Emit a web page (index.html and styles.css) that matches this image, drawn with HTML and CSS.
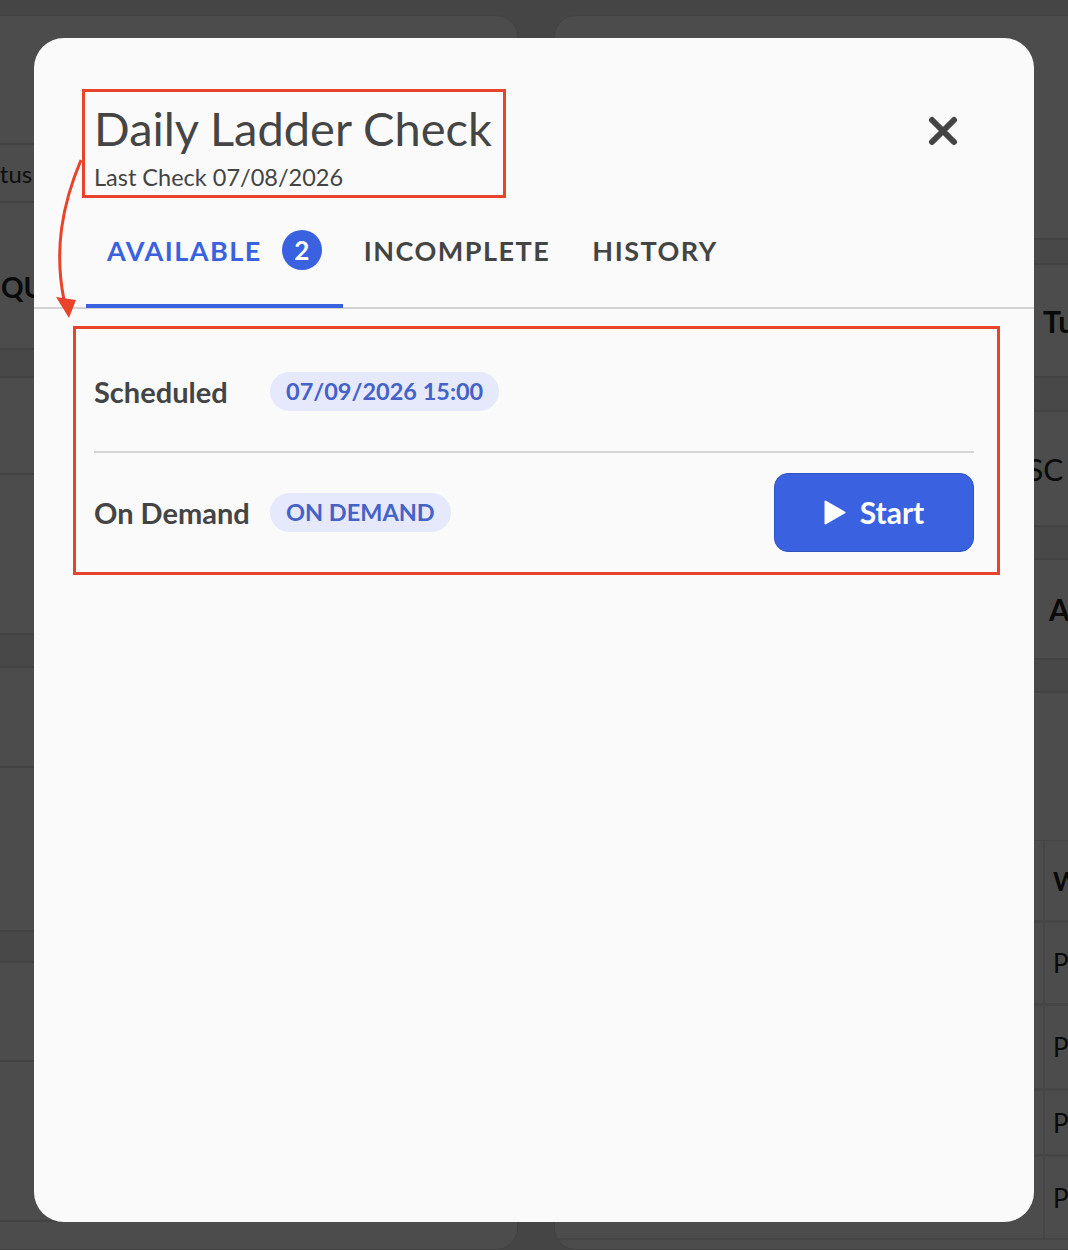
FILE: index.html
```html
<!DOCTYPE html>
<html lang="en">
<head>
    <meta charset="UTF-8">
    <meta name="viewport" content="width=device-width, initial-scale=1.0">
    <title>Daily Ladder Check</title>
    <link rel="stylesheet" href="styles.css">
</head>
<body>
    <!-- page behind the dialog -->
    <div class="page">
        <section class="panel panel-left">
            <div class="prow" style="height: 129px"></div>
            <div class="prow prow-text" style="height: 58px"><span class="status-label">Status</span></div>
            <div class="prow prow-text prow-top" style="height: 147px"><span class="queue-label">QUEUE</span></div>
            <div class="prow prow-band" style="height: 28px"></div>
            <div class="prow" style="height: 97px"></div>
            <div class="prow" style="height: 160px"></div>
            <div class="prow prow-band" style="height: 33px"></div>
            <div class="prow" style="height: 100px"></div>
            <div class="prow" style="height: 164px"></div>
            <div class="prow prow-band" style="height: 31px"></div>
            <div class="prow" style="height: 99px"></div>
            <div class="prow" style="height: 160px"></div>
        </section>
        <section class="panel panel-right">
            <div class="prow" style="height: 224px"></div>
            <div class="prow prow-band" style="height: 25px"></div>
            <div class="prow prow-text" style="height: 113px"><span class="side-label">Tu</span></div>
            <div class="prow prow-band" style="height: 34px"></div>
            <div class="prow prow-text" style="height: 115px"><span class="side-label side-sc">SC</span></div>
            <div class="prow prow-band" style="height: 33px"></div>
            <div class="prow prow-text" style="height: 100px"><span class="side-label side-a">A</span></div>
            <div class="prow prow-band" style="height: 33px"></div>
            <div class="prow prow-plain" style="height: 147px"></div>
            <div class="trow trow-head" style="height: 82px"><span class="tcell"></span><span class="tcell tcell-bold">W</span></div>
            <div class="trow" style="height: 83px"><span class="tcell"></span><span class="tcell">P</span></div>
            <div class="trow" style="height: 85px"><span class="tcell"></span><span class="tcell">P</span></div>
            <div class="trow" style="height: 66px"><span class="tcell"></span><span class="tcell">P</span></div>
            <div class="trow" style="height: 84px"><span class="tcell"></span><span class="tcell">P</span></div>
        </section>
    </div>

    <div class="overlay"></div>

    <div class="modal">
        <div class="modal-header">
            <div class="modal-titles">
                <h1 class="modal-title">Daily Ladder Check</h1>
                <div class="modal-subtitle">Last Check 07/08/2026</div>
            </div>
            <button class="close-btn" aria-label="Close">
                <svg width="30" height="30" viewBox="0 0 30 30">
                    <path d="M4 4 L26 26 M26 4 L4 26" stroke="#444" stroke-width="6" stroke-linecap="round" fill="none"/>
                </svg>
            </button>
        </div>

        <nav class="tabs">
            <div class="tab active">Available <span class="tab-count">2</span></div>
            <div class="tab">Incomplete</div>
            <div class="tab">History</div>
        </nav>

        <div class="check-list">
            <div class="check-row">
                <div class="check-label">Scheduled</div>
                <span class="chip">07/09/2026 15:00</span>
            </div>
            <div class="check-row">
                <div class="check-label">On Demand</div>
                <span class="chip">ON DEMAND</span>
                <button class="start-btn">
                    <svg width="22" height="25" viewBox="0 0 22 25">
                        <path d="M1.5 1.5 L20.5 12.5 L1.5 23.5 Z" fill="#fff" stroke="#fff" stroke-width="2" stroke-linejoin="round"/>
                    </svg>
                    Start
                </button>
            </div>
        </div>
    </div>

    <!-- review markup drawn over the dialog -->
    <svg class="markup" width="1068" height="1250" viewBox="0 0 1068 1250">
        <rect x="83.5" y="90.5" width="421" height="106" fill="none" stroke="#e8432b" stroke-width="3"/>
        <rect x="74.5" y="327.5" width="924" height="246" fill="none" stroke="#e8432b" stroke-width="3"/>
        <path d="M81 160 C 62 205, 54 250, 64 300" fill="none" stroke="#e8432b" stroke-width="3"/>
        <polygon points="56,297 76,300 69,318" fill="#e8432b"/>
    </svg>
</body>
</html>
```

FILE: styles.css
```css
body {
    margin: 0;
    overflow: hidden;
    font-family: 'Lato', 'Open Sans', sans-serif;
    background: #e8e8e8;
}

/* background page */
.page {
    display: flex;
    gap: 36px;
    padding-top: 15px;
    height: 1235px;
    overflow: hidden;
}
.panel {
    background: #fff;
    border: 1px solid #dcdcdc;
    border-radius: 22px;
    overflow: hidden;
}
.panel-left {
    width: 576px;
    margin-left: -60px;
    flex-shrink: 0;
}
.panel-right {
    flex: 1;
    margin-right: -60px;
}
.prow {
    border-bottom: 2px solid #e0e0e0;
    box-sizing: border-box;
    display: flex;
    align-items: center;
}
.prow-band {
    background: #f2f2f2;
}
.prow-plain {
    border-bottom: none;
}
.prow-top {
    align-items: flex-start;
}
.status-label {
    padding-left: 26px;
    font-size: 24px;
    color: #333;
}
.queue-label {
    padding-left: 60px;
    padding-top: 67px;
    font-size: 28px;
    font-weight: 700;
    color: #222;
}
.side-label {
    padding-left: 488px;
    font-size: 30px;
    font-weight: 700;
    color: #222;
}
.side-sc {
    padding-left: 472px;
    font-weight: 400;
}
.side-a {
    padding-left: 494px;
}
.trow {
    display: flex;
    border-bottom: 2px solid #e6e6e6;
    box-sizing: border-box;
    border-top: 1px solid #eaeaea;
}
.tcell {
    display: flex;
    align-items: center;
    padding-left: 8px;
    font-size: 26px;
    color: #222;
}
.tcell:first-child {
    width: 488px;
    flex-shrink: 0;
    padding: 0;
    border-right: 2px solid #e6e6e6;
}
.tcell-bold {
    font-weight: 700;
}

.overlay {
    position: fixed;
    inset: 0;
    background: rgba(0, 0, 0, 0.7);
}

/* dialog */
.modal {
    position: fixed;
    left: 34px;
    top: 38px;
    width: 1000px;
    height: 1184px;
    background: #fafafa;
    border-radius: 30px;
    color: #444;
}
.modal-header {
    display: flex;
    justify-content: space-between;
    align-items: flex-start;
    padding: 61px 76px 0 60px;
}
.modal-title {
    margin: 0;
    font-size: 47px;
    line-height: 58px;
    font-weight: 400;
    color: #454545;
}
.modal-subtitle {
    margin-top: 6px;
    font-size: 23.5px;
    line-height: 29px;
    color: #444;
}
.close-btn {
    margin-top: 17px;
    padding: 0;
    border: none;
    background: none;
    cursor: pointer;
}

.tabs {
    display: flex;
    margin-top: 4px;
    padding-left: 52px;
    border-bottom: 2px solid #d2d2d2;
}
.tab {
    display: flex;
    align-items: center;
    height: 108px;
    padding: 0 21px;
    border-bottom: 4px solid transparent;
    margin-bottom: -1px;
    font-size: 27px;
    font-weight: 700;
    letter-spacing: 1.5px;
    text-transform: uppercase;
    color: #444;
}
.tab.active {
    color: #3a62e0;
    border-bottom-color: #3a62e0;
}
.tab-count {
    display: inline-flex;
    align-items: center;
    justify-content: center;
    width: 40px;
    height: 40px;
    margin-left: 20px;
    border-radius: 50%;
    background: #3a62e0;
    color: #fff;
    font-size: 26px;
    letter-spacing: 0;
}

.check-list {
    padding: 22px 60px;
}
.check-row {
    display: flex;
    align-items: center;
    min-height: 80px;
    padding: 20px 0;
}
.check-row + .check-row {
    border-top: 2px solid #d6d6d6;
    padding-top: 19px;
}
.check-label {
    width: 176px;
    flex-shrink: 0;
    font-size: 29px;
    font-weight: 700;
    color: #444;
}
.chip {
    display: inline-flex;
    align-items: center;
    height: 39px;
    padding: 0 16px;
    border-radius: 20px;
    background: #e5e9fb;
    color: #4562c8;
    font-size: 23.5px;
    font-weight: 700;
}
.start-btn {
    margin-left: auto;
    display: flex;
    align-items: center;
    justify-content: center;
    gap: 14px;
    width: 200px;
    height: 79px;
    border: 1.5px solid #2e52c2;
    border-radius: 14px;
    background: #3a62e0;
    color: #fff;
    font-family: 'Lato', sans-serif;
    font-size: 30px;
    font-weight: 700;
    cursor: pointer;
}

.markup {
    position: fixed;
    left: 0;
    top: 0;
    pointer-events: none;
}
```
